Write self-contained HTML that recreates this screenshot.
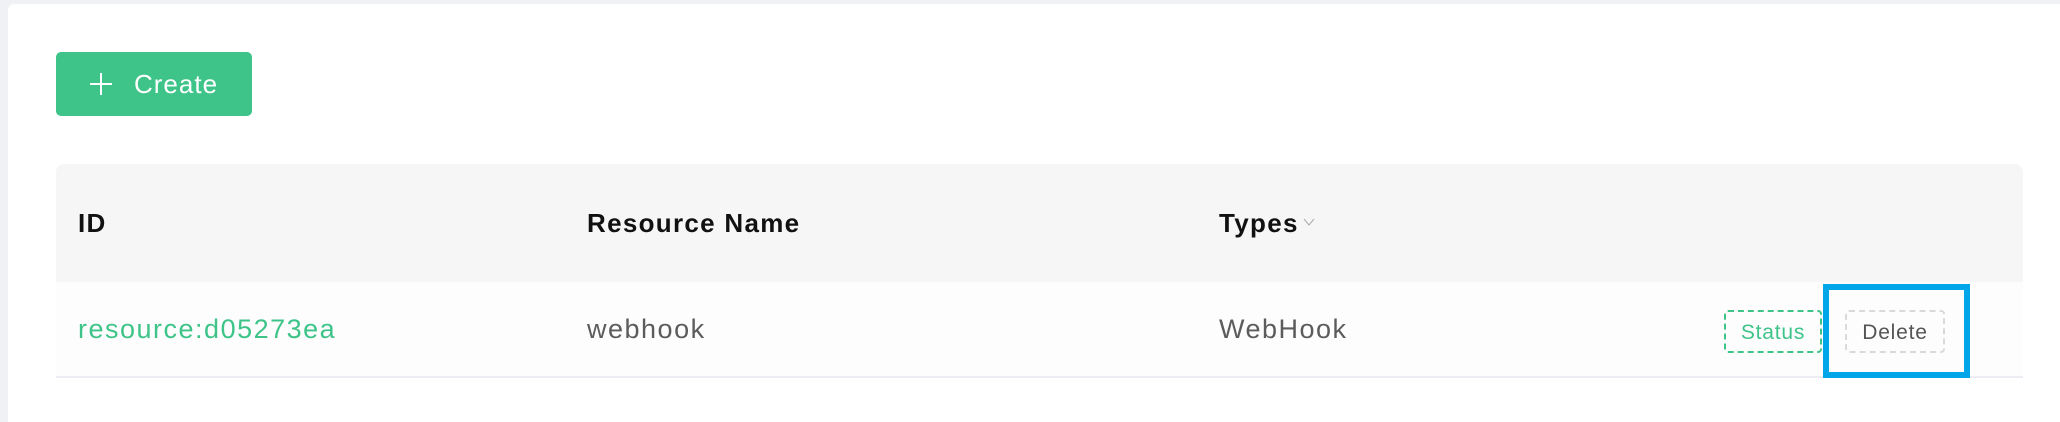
<!DOCTYPE html>
<html><head><meta charset="utf-8"><style>
*{margin:0;padding:0;box-sizing:border-box}
body{width:2060px;height:422px;background:#eff1f5;font-family:"Liberation Sans",sans-serif;position:relative;overflow:hidden}
.card{position:absolute;left:8px;top:4px;right:0;bottom:0;background:#fff;border-top-left-radius:6px}
.btn{position:absolute;left:56px;top:52px;width:196px;height:64px;background:#3ec489;border-radius:5px;color:#fff;font-size:26px;line-height:64px;letter-spacing:1px}
.btn svg{position:absolute;left:34px;top:21px}
.btn span{position:absolute;left:78px}
.head{position:absolute;left:56px;top:164px;width:1967px;height:118px;background:#f6f6f6;border-radius:8px 8px 0 0}
.row{position:absolute;left:56px;top:282px;width:1967px;height:96px;background:#fdfdfd;border-bottom:2px solid #eceef3}
.t{position:absolute}
.h{font-weight:bold;color:#111;top:208px;font-size:26px;letter-spacing:1.3px}
.r{top:314px;color:#5c5c5c;font-size:27px;letter-spacing:1.5px}
.tag{position:absolute;top:310px;height:43px;font-size:21px;line-height:41px;text-align:center;border-radius:4px;letter-spacing:0.8px}
.blue{position:absolute;left:1823px;top:284px;width:147px;height:94px;border:6px solid #00a6e8}
</style></head><body>
<div class="card"></div>
<div class="btn"><svg width="22" height="22" viewBox="0 0 22 22"><path d="M11 0V22M0 11H22" stroke="#fff" stroke-width="2"/></svg><span>Create</span></div>
<div class="head"></div>
<div class="row"></div>
<div class="t h" style="left:78px">ID</div>
<div class="t h" style="left:587px">Resource Name</div>
<div class="t h" style="left:1219px">Types</div>
<svg style="position:absolute;left:1303px;top:218px" width="12" height="8" viewBox="0 0 12 8"><path d="M1 1L6 7L11 1" fill="none" stroke="#aaa" stroke-width="1"/></svg>
<div class="t r" style="left:78px;color:#3ec489">resource:d05273ea</div>
<div class="t r" style="left:587px">webhook</div>
<div class="t r" style="left:1219px">WebHook</div>
<div class="tag" style="left:1724px;width:98px;border:2px dashed #3ec489;color:#3ec489">Status</div>
<div class="tag" style="left:1845px;width:100px;border:2px dashed #d9d9d9;color:#555">Delete</div>
<div class="blue"></div>
</body></html>
